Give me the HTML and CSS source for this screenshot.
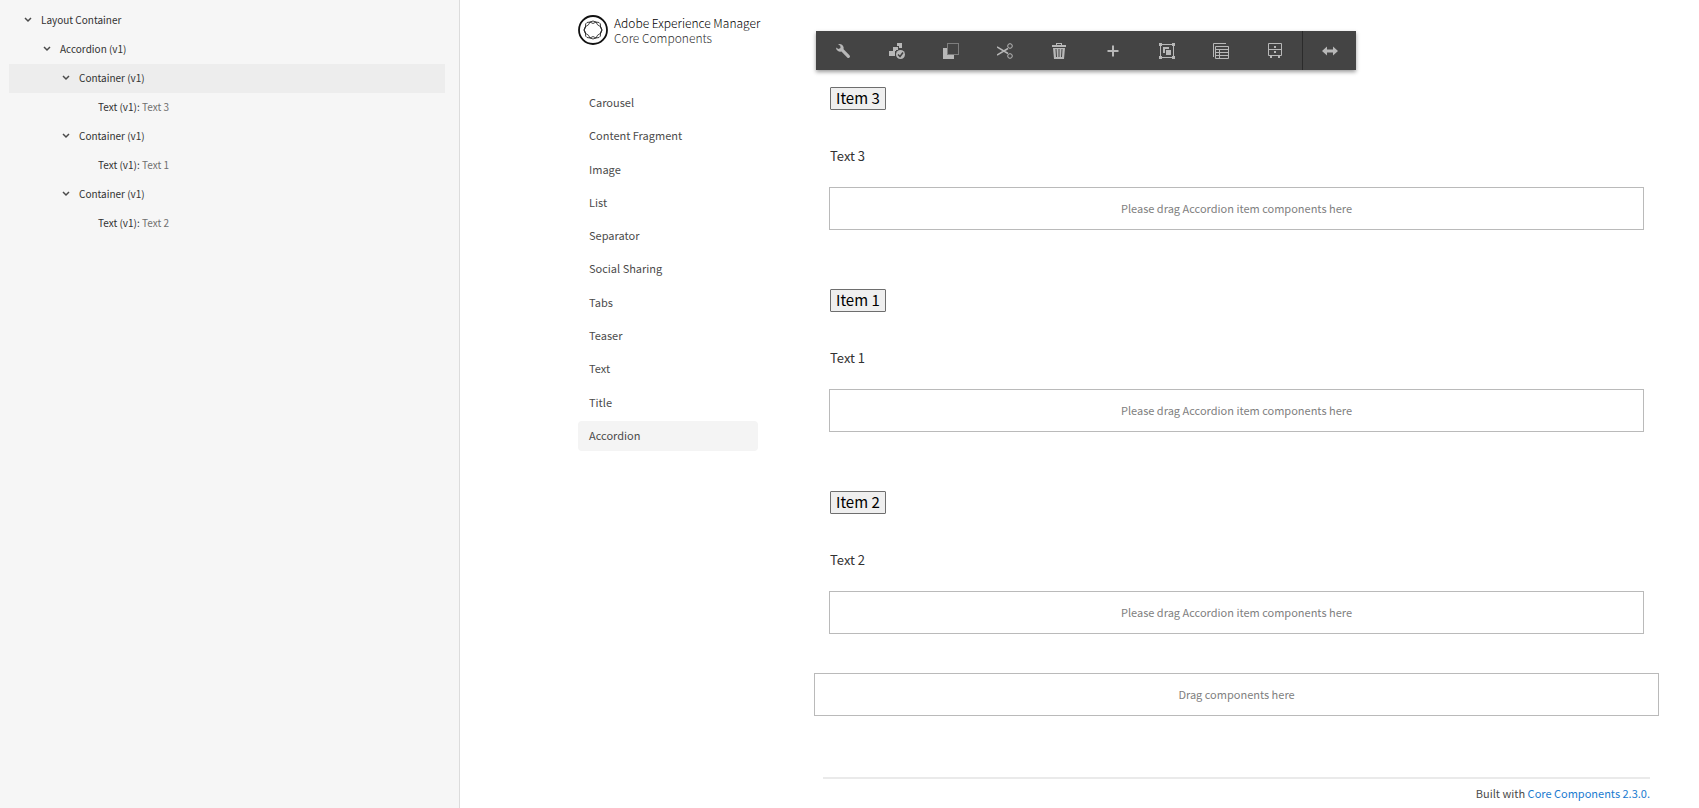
FILE: index.html
```html
<!DOCTYPE html>
<html lang="en">
<head>
    <meta charset="UTF-8">
    <meta name="viewport" content="width=device-width, initial-scale=1.0">
    <title>Accordion - Core Components</title>
    <link rel="stylesheet" href="styles.css">
</head>
<body>
    <div class="editor">
        <aside class="tree">
            <ul>
                <li class="level-1"><svg class="chevron" viewBox="0 0 8 6"><path d="M1 1l3 3 3-3"/></svg>Layout Container</li>
                <li class="level-2"><svg class="chevron" viewBox="0 0 8 6"><path d="M1 1l3 3 3-3"/></svg>Accordion (v1)</li>
                <li class="level-3 selected"><svg class="chevron" viewBox="0 0 8 6"><path d="M1 1l3 3 3-3"/></svg>Container (v1)</li>
                <li class="level-4">Text (v1):&nbsp;<span>Text 3</span></li>
                <li class="level-3"><svg class="chevron" viewBox="0 0 8 6"><path d="M1 1l3 3 3-3"/></svg>Container (v1)</li>
                <li class="level-4">Text (v1):&nbsp;<span>Text 1</span></li>
                <li class="level-3"><svg class="chevron" viewBox="0 0 8 6"><path d="M1 1l3 3 3-3"/></svg>Container (v1)</li>
                <li class="level-4">Text (v1):&nbsp;<span>Text 2</span></li>
            </ul>
        </aside>

        <div class="page">
            <div class="side">
                <div class="logo">
                    <svg viewBox="0 0 30 30">
                        <circle cx="15" cy="15" r="14" stroke-width="1.8"/>
                        <path d="M9 7.500q3-1.500 6 1q3-2.500 6-1q2 1 1.500 3.500q-.5 2 1.500 4q-2 2-1.500 4q.5 2.500-1.500 3.500q-3 1.500-6-1q-3 2.500-6 1q-2-1-1.500-3.500q.5-2-1.500-4q2-2 1.500-4q-.5-2.500 1.500-3.500z"/>
                        <path d="M12 7q3-2 6 0q.5 3 5 5q2 3 0 6q-4.500 2-5 5q-3 2-6 0q-.5-3-5-5q-2-3 0-6q4.500-2 5-5z"/>
                    </svg>
                    <div>
                        <div class="logo-title">Adobe Experience Manager</div>
                        <div class="logo-sub">Core Components</div>
                    </div>
                </div>
                <nav>
                    <a href="#">Carousel</a>
                    <a href="#">Content Fragment</a>
                    <a href="#">Image</a>
                    <a href="#">List</a>
                    <a href="#">Separator</a>
                    <a href="#">Social Sharing</a>
                    <a href="#">Tabs</a>
                    <a href="#">Teaser</a>
                    <a href="#">Text</a>
                    <a href="#">Title</a>
                    <a href="#" class="active">Accordion</a>
                </nav>
            </div>

            <main>
                <div class="toolbar">
                    <button title="Configure"><svg viewBox="0 0 16 16"><path d="M1 4.500l2.500 1.500 2-1-.2-2.300L3 1.200A4.300 4.300 0 0 1 8.600 6.300l5.900 5.900a1.600 1.600 0 0 1-2.300 2.300L6.400 8.600A4.300 4.300 0 0 1 1 4.500z"/></svg></button>
                    <button title="Policy"><svg viewBox="0 0 16 16"><path d="M0 8h6v5H0zM4 4h5v3H7v1H4zM8 0h5v5h-3V3H8z"/><circle cx="11.500" cy="11.500" r="4.500"/><path class="cut" d="M9 11.500l2 2 3-4"/></svg></button>
                    <button title="Copy"><svg viewBox="0 0 16 16"><path d="M0 5h4v7h7v4H0z"/><path class="line dotted" d="M4.500.5h11v11h-11z"/></svg></button>
                    <button title="Cut"><svg viewBox="0 0 16 16"><path class="line thick" d="M0 4l11 6.500M0 12l11-6.500"/><circle class="line" cx="13" cy="3" r="2.300"/><circle class="line" cx="13" cy="13" r="2.300"/></svg></button>
                    <button title="Delete"><svg viewBox="0 0 16 16"><path d="M1 2h4V0h6v2h4v2H1zM6 1v1h4V1zM2 5h12l-1 11H3zM4.500 6l.5 8h1L5.500 6zM7.500 6v8h1V6zM10.500 6l-.5 8h1l.5-8z" fill-rule="evenodd"/></svg></button>
                    <button title="Insert"><svg viewBox="0 0 16 16"><path d="M7 2.500h2V7h4.500v2H9v4.500H7V9H2.500V7H7z"/></svg></button>
                    <button title="Group"><svg viewBox="0 0 16 16"><path class="line" d="M1.500 1.500h13v13h-13z"/><path d="M0 0h3v3H0zM13 0h3v3h-3zM0 13h3v3H0zM13 13h3v3h-3zM4 4h6v2H6v4H4zM7 7h5v5H7z"/></svg></button>
                    <button title="Layout"><svg viewBox="0 0 16 16"><path class="line" d="M.5 14V.5H13M2.500 3.500h13v12h-13zM3 6.500h12M3 9.500h12M3 12.500h12M6.500 7v8"/></svg></button>
                    <button title="Select panel"><svg viewBox="0 0 16 16"><path class="line" d="M1.500.5h13v12h-13zM2 6.500h12"/><path d="M7 3h2v2H7zM7 8h2v2H7zM3 13h2v2H3zM11 13h2v2h-2z"/></svg></button>
                    <button title="Parent" class="last"><svg viewBox="0 0 16 16"><path d="M0 8l5-4.500V6.500h6V3.500L16 8l-5 4.500V9.500H5v3z"/></svg></button>
                </div>

                <div class="accordion">
                    <section>
                        <button class="item">Item 3</button>
                        <p>Text 3</p>
                        <div class="dropzone">Please drag Accordion item components here</div>
                    </section>
                    <section>
                        <button class="item">Item 1</button>
                        <p>Text 1</p>
                        <div class="dropzone">Please drag Accordion item components here</div>
                    </section>
                    <section>
                        <button class="item">Item 2</button>
                        <p>Text 2</p>
                        <div class="dropzone">Please drag Accordion item components here</div>
                    </section>
                </div>

                <div class="dropzone">Drag components here</div>

                <footer>Built with <a href="#">Core Components 2.3.0.</a></footer>
            </main>
        </div>
    </div>
</body>
</html>
```
FILE: styles.css
```css
* {
    box-sizing: border-box;
}
body {
    margin: 0;
    font-family: "Noto Sans CJK SC", "Open Sans", sans-serif;
    font-size: 11px;
    line-height: 20px;
    color: #4b4b4b;
    background-color: #fff;
}
button {
    font-family: inherit;
}
.editor {
    display: grid;
    grid-template-columns: 460px 1fr;
    min-height: 100vh;
}

/* content tree */
.tree {
    padding: 6px 14px 0 9px;
    background-color: #f6f6f6;
    border-right: 1px solid #dcdcdc;
}
.tree ul {
    margin: 0;
    padding: 0;
    list-style: none;
}
.tree li {
    display: flex;
    align-items: center;
    height: 29px;
    padding-bottom: 2px;
    font-size: 10px;
    color: #323232;
}
.tree li span {
    color: #707070;
}
.tree .selected {
    background-color: #ededed;
}
.level-1 {
    padding-left: 15px;
}
.level-2 {
    padding-left: 34px;
}
.level-3 {
    padding-left: 53px;
}
.level-4 {
    padding-left: 89px;
}
.chevron {
    width: 8px;
    height: 6px;
    margin-right: 9px;
    fill: none;
    stroke: #4b4b4b;
    stroke-width: 1.5;
}

/* page */
.page {
    display: grid;
    grid-template-columns: 180px 1fr;
    column-gap: 56px;
    padding: 0 40px 0 118px;
}
.logo {
    display: flex;
    gap: 6px;
    padding-top: 15px;
    white-space: nowrap;
    line-height: 15px;
    color: #000;
}
.logo svg {
    flex-shrink: 0;
    width: 30px;
    height: 30px;
    fill: none;
    stroke: #111;
    stroke-width: 0.8;
}
.logo-title,
.logo-sub {
    font-size: 12px;
    font-weight: 300;
}
.logo-sub {
    color: #323232;
}
nav {
    display: flex;
    flex-direction: column;
    justify-content: space-between;
    min-height: 363px;
    margin-top: 43px;
}
nav a {
    padding: 4px 11px 6px;
    border-radius: 4px;
    color: #4b4b4b;
    text-decoration: none;
}
nav .active {
    background-color: #f4f4f4;
}

/* toolbar */
.toolbar {
    display: flex;
    width: 540px;
    margin: 31px 0 0 2px;
    background-color: #444;
    box-shadow: 0 2px 4px rgba(0, 0, 0, 0.4);
}
.toolbar button {
    display: flex;
    align-items: center;
    justify-content: center;
    width: 54px;
    height: 39px;
    padding: 0;
    border: none;
    background: none;
    cursor: pointer;
}
.toolbar .last {
    border-left: 1px solid #2b2b2b;
}
.toolbar svg {
    width: 16px;
    height: 16px;
    fill: #b8b8b8;
}
.toolbar .line {
    fill: none;
    stroke: #b8b8b8;
}
.toolbar .thick {
    stroke-width: 1.5;
}
.toolbar .dotted {
    stroke-dasharray: 1 1;
}
.toolbar .cut {
    fill: none;
    stroke: #444;
    stroke-width: 1.5;
}

/* accordion */
.accordion {
    padding: 17px 15px 0;
}
.accordion section {
    height: 202px;
}
.item {
    display: block;
    height: 23px;
    margin-left: 1px;
    padding: 0 5px 2px;
    border: 1px solid #6e6e6e;
    border-radius: 1px;
    background-color: #efefef;
    color: #000;
    font-size: 15px;
    line-height: 19px;
}
.accordion p {
    margin: 36px 0 21px 1px;
    font-size: 13px;
    color: #323232;
}
.dropzone {
    padding: 10px 11px 11px;
    border: 1px solid #bababa;
    text-align: center;
    color: #808080;
}
.accordion + .dropzone {
    margin-top: -20px;
}
footer {
    margin: 61px 9px 0;
    padding-top: 4px;
    border-top: 2px solid #eaeaea;
    text-align: right;
}
footer a {
    color: #1a7bd0;
    text-decoration: none;
}
```
